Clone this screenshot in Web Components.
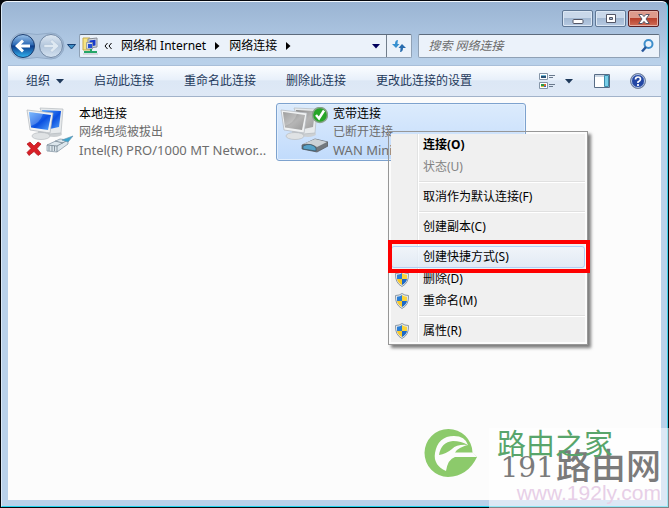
<!DOCTYPE html>
<html lang="zh-CN">
<head>
<meta charset="UTF-8">
<meta name="viewport" content="width=device-width, initial-scale=1">
<title>网络连接</title>
<style>
    * {
        box-sizing: border-box;
    }

    body {
        margin: 0;
        min-height: 100vh;
        display: flex;
        background: #05070c;
        color: #000;
        font: 12px/18px "Noto Sans", "Noto Sans CJK SC", sans-serif;
    }
</style>
</head>
<body>

<explorer-window>
    <window-controls slot="title"></window-controls>
    <nav-bar slot="nav"></nav-bar>
    <command-bar slot="commands"></command-bar>

    <connection-item name="本地连接" status="网络电缆被拔出" device="Intel(R) PRO/1000 MT Networ..." kind="lan"></connection-item>
    <connection-item name="宽带连接" status="已断开连接" device="WAN Minip" kind="wan" selected></connection-item>
</explorer-window>

<context-menu>
    <menu-item bold>连接(O)</menu-item>
    <menu-item disabled>状态(U)</menu-item>
    <menu-line></menu-line>
    <menu-item>取消作为默认连接(F)</menu-item>
    <menu-line></menu-line>
    <menu-item>创建副本(C)</menu-item>
    <menu-line></menu-line>
    <menu-item marked>创建快捷方式(S)</menu-item>
    <menu-item shield>删除(D)</menu-item>
    <menu-item shield>重命名(M)</menu-item>
    <menu-line></menu-line>
    <menu-item shield>属性(R)</menu-item>
</context-menu>

<site-mark></site-mark>

<script>
    class ExplorerWindow extends HTMLElement {
        constructor() {
            super();
            this.attachShadow({ mode: 'open' });

            this.shadowRoot.innerHTML = `
                <style>
                    * {
                        box-sizing: border-box;
                    }

                    :host {
                        flex: 1;
                        margin: 1px;
                        display: flex;
                        flex-direction: column;
                        padding: 0 6px 6px;
                        box-sizing: border-box;
                        border: 1px solid;
                        border-color: #f1f7fd #3fd0ea #22d3ee #dbe9f7;
                        border-radius: 6px 6px 0 0;
                        background: linear-gradient(#9ab4d3, #b9d1ea 60px) #b9d1ea;
                    }

                    main {
                        flex: 1;
                        display: flex;
                        flex-wrap: wrap;
                        align-content: flex-start;
                        gap: 4px;
                        padding: 6px 14px;
                        background: #fcfcfc;
                    }
                </style>
                <slot name="title"></slot>
                <slot name="nav"></slot>
                <slot name="commands"></slot>
                <main><slot></slot></main>
            `;
        }
    }

    class WindowControls extends HTMLElement {
        constructor() {
            super();
            this.attachShadow({ mode: 'open' });

            this.shadowRoot.innerHTML = `
                <style>
                    :host {
                        display: flex;
                        justify-content: flex-end;
                        gap: 2px;
                        padding: 8px 2px 7px;
                    }

                    button {
                        width: 31px;
                        height: 17px;
                        padding: 0;
                        border: 1px solid #5f7795;
                        border-radius: 2px;
                        background: linear-gradient(#c9d8ea 45%, #a3b9d3 50%, #b6cae2);
                        box-shadow: inset 0 0 0 1px #dbe7f4;
                    }

                    .close {
                        border-color: #5a1f24;
                        background: linear-gradient(#dd9a8c 45%, #b8402c 50%, #cf6d57);
                        box-shadow: inset 0 0 0 1px #e5b0a5;
                    }

                    svg {
                        display: block;
                        margin: auto;
                    }
                </style>
                <button aria-label="最小化"><svg width="12" height="12"><rect x="1" y="6.5" width="10" height="4" rx="1" fill="#fff" stroke="#535666"/></svg></button>
                <button aria-label="最大化"><svg width="12" height="12"><path d="M1.500 1.500h9v8h-9zM4.500 4.500h3v2h-3z" fill="#fff" fill-rule="evenodd" stroke="#535666"/></svg></button>
                <button class="close" aria-label="关闭"><svg width="12" height="12"><path d="M.7 1.500h3.500L6 3.600l1.800-2.100h3.500L8 6l3.300 4.500H7.800L6 8.400l-1.800 2.100H.7L4 6z" fill="#fff" stroke="#535666"/></svg></button>
            `;
        }
    }

    class NavBar extends HTMLElement {
        constructor() {
            super();
            this.attachShadow({ mode: 'open' });

            this.shadowRoot.innerHTML = `
                <style>
                    * {
                        box-sizing: border-box;
                    }

                    :host {
                        display: flex;
                        align-items: flex-start;
                        gap: 3px;
                        height: 31px;
                        padding-left: 2px;
                    }

                    button {
                        display: flex;
                        align-items: center;
                        padding: 0;
                        border: 0;
                        background: none;
                        color: inherit;
                        font: inherit;
                    }

                    .travel {
                        flex: none;
                        display: flex;
                        width: 66px;
                        height: 24px;
                    }

                    .travel svg {
                        overflow: visible;
                        flex: none;
                    }

                    .address,
                    .search {
                        display: flex;
                        align-items: center;
                        height: 24px;
                        min-width: 0;
                        border: 1px solid #8fa1b5;
                        border-top-color: #5d6b7c;
                        border-radius: 2px;
                        background: #ebf2fa;
                    }

                    .address {
                        flex: 334 1 334px;
                        margin-right: 3px;
                        padding-left: 2px;
                    }

                    .address svg {
                        flex: none;
                    }

                    .crumbs {
                        flex: 1;
                        display: flex;
                        align-items: center;
                        gap: 9px;
                        padding-left: 5px;
                        white-space: nowrap;
                    }

                    .refresh {
                        align-self: stretch;
                        width: 25px;
                        margin-left: 6px;
                        justify-content: center;
                        border-left: 1px solid #717e8c;
                    }

                    .search {
                        flex: 242 1 242px;
                        margin-right: 1px;
                        padding: 0 5px 0 9px;
                    }

                    input {
                        flex: 1;
                        min-width: 0;
                        padding: 0;
                        border: 0;
                        outline: 0;
                        background: none;
                        font: inherit;
                    }

                    input::placeholder {
                        color: #6d6d6d;
                        font-style: italic;
                    }
                </style>

                <div class="travel">
                    <button aria-label="后退"><svg width="28" height="24" viewBox="0 0 28 24"><defs><linearGradient id="b" x2="0" y2="1"><stop stop-color="#9cc3ea"/><stop offset=".45" stop-color="#2a68b4"/><stop offset=".5" stop-color="#0b3b8c"/><stop offset="1" stop-color="#35b5f0"/></linearGradient></defs><path d="M13-1Q27 2 41-1a13 13 0 0 1 0 26Q27 22 13 25a13 13 0 0 1 0-26z" fill="#a9c0da" stroke="#92abc8"/><circle cx="13" cy="12" r="11.500" fill="url(#b)" stroke="#1d3e70"/><path d="M5 12l7-6.500 2 2.200-3 2.800h9v3h-9l3 2.800-2 2.200z" fill="#fff"/></svg></button>
                    <button aria-label="前进"><svg width="28" height="24" viewBox="0 0 28 24"><defs><linearGradient id="f" x2="0" y2="1"><stop stop-color="#dfe9f3"/><stop offset=".5" stop-color="#b3c6dc"/><stop offset="1" stop-color="#d4e2f0"/></linearGradient></defs><circle cx="13" cy="12" r="11.500" fill="url(#f)" stroke="#7188a5"/><path d="M21 12l-7-6.500-2 2.200 3 2.800H6v3h9l-3 2.800 2 2.200z" fill="#dfe9f2" stroke="#a9bdd3" stroke-width=".5"/></svg></button>
                    <button aria-label="最近的页面"><svg width="10" height="24" viewBox="0 0 10 24"><path d="M1.500 10.500h8L5.500 15z" fill="#3d8fc6" stroke="#173f73"/></svg></button>
                </div>

                <div class="address">
                    <svg width="17" height="18" viewBox="0 0 17 18"><path d="M1 1h7v12H1z" fill="#f6e482" stroke="#c6a94a"/><path d="M6 2l9-1v9l-9 1z" fill="#d8dce2" stroke="#858b95"/><path d="M7.500 3.500l6-.7v5.800l-6 1z" fill="#1639c9"/><path d="M4.500 5.500h6V12h-6z" fill="#d6dde8" stroke="#838c98" stroke-width=".7"/><path d="M6 7h4v4H6z" fill="#2450d5"/><path d="M8 12h2v2h5v2H2v-2h6z" fill="#24a567"/><path d="M1 17h15" stroke="#b7bec4"/></svg>
                    <div class="crumbs">
                        <button aria-label="上级"><svg width="8" height="8"><path d="M3.500 1L1 4l2.500 3M7.500 1L5 4l2.500 3" fill="none" stroke="#000"/></svg></button>
                        <button>网络和 Internet</button>
                        <svg width="5" height="8"><path d="M0 0v8l4.500-4z"/></svg>
                        <button>网络连接</button>
                        <svg width="5" height="8"><path d="M0 0v8l4.500-4z"/></svg>
                    </div>
                    <button aria-label="以前的位置"><svg width="8" height="5"><path d="M0 0h8L4 4.500z" fill="#00005c"/></svg></button>
                    <button class="refresh" aria-label="刷新"><svg width="14" height="14"><path d="M6 1Q3 1 3 5H0l4 4 3.500-4H5.500Q5.500 3 6 1z" fill="#3690d0"/><path d="M8 13q3 0 3-4h3l-4-4-3.500 4h2q0 2-.5 4z" fill="#286cae"/></svg></button>
                </div>

                <div class="search">
                    <input type="text" placeholder="搜索 网络连接" aria-label="搜索 网络连接">
                    <svg width="14" height="14"><circle cx="8.500" cy="5" r="4" fill="none" stroke="#3d8ecb" stroke-width="2"/><path d="M6 8l-4 4.500" stroke="#28579a" stroke-width="2.500"/></svg>
                </div>
            `;
        }
    }

    class CommandBar extends HTMLElement {
        constructor() {
            super();
            this.attachShadow({ mode: 'open' });

            this.shadowRoot.innerHTML = `
                <style>
                    :host {
                        display: flex;
                        align-items: center;
                        height: 32px;
                        padding: 0 0 0 3px;
                        box-sizing: border-box;
                        border-top: 1px solid #a9bfd9;
                        border-bottom: 1px solid #a2b3ca;
                        background: linear-gradient(#fbfdff, #e8f0fa 45%, #dce7f5 50%, #dfe9f6);
                    }

                    button {
                        display: flex;
                        align-items: center;
                        gap: 6px;
                        padding: 0 15px;
                        border: 0;
                        background: none;
                        color: #1e395b;
                        font: inherit;
                        white-space: nowrap;
                    }

                    .view {
                        margin-left: auto;
                        gap: 10px;
                        padding: 0 21px 0 0;
                    }

                    .pane {
                        padding: 0 10px 0 0;
                    }

                    .help {
                        padding: 0 15px 0 10px;
                    }
                </style>
                <button>组织 <svg width="8" height="5"><path d="M0 0h8L4 4.500z" fill="#1e395b"/></svg></button>
                <button>启动此连接</button>
                <button>重命名此连接</button>
                <button>删除此连接</button>
                <button>更改此连接的设置</button>
                <button class="view" aria-label="更改视图">
                    <svg width="16" height="16"><path d="M.5.500h8v6h-8zM.5 9.500h8v6h-8z" fill="#fff" stroke="#8494a7"/><path d="M2 2h5v1H2z" fill="#6db6d3"/><path d="M2 3h5v2H2z" fill="#264e73"/><path d="M2 11h3v2H2z" fill="#2a9a46"/><path d="M5 11h2v2H5z" fill="#d56b35"/><path d="M2 13h3v1H2z" fill="#d4b832"/><path d="M5 13h2v1H5z" fill="#3264c5"/><path d="M10 2.500h6M10 4.500h4M10 11.500h6M10 13.500h4" stroke="#68788c"/></svg>
                    <svg width="8" height="5"><path d="M0 0h8L4 4.500z" fill="#1e395b"/></svg>
                </button>
                <button class="pane" aria-label="显示预览窗格"><svg width="16" height="14"><path d="M.5.500h15v13H.5z" fill="#fff" stroke="#586c86"/><path d="M1 1h14v2H1z" fill="#cbd7e4"/><path d="M10.500 1.500h4v11h-4z" fill="#78cee8" stroke="#3c8aa9"/></svg></button>
                <button class="help" aria-label="获取帮助"><svg width="16" height="16"><circle cx="8" cy="8" r="7.500" fill="#2347a5" stroke="#76849b"/><circle cx="8" cy="8" r="6.500" fill="none" stroke="#b8c8e2"/><path d="M5.500 6.500Q5.500 4 8 4t2.500 2.200Q10.500 7.500 8 9v1M8 11v2" fill="none" stroke="#fff" stroke-width="1.700"/></svg></button>
            `;
        }
    }

    // two monitors, shared by both kinds of connection
    const screens = (on) => `
        <defs>
            <linearGradient id="s" x2="1" y2="1"><stop stop-color="${on ? '#58a8ff' : '#858585'}"/><stop offset=".55" stop-color="${on ? '#0a4fe0' : '#b5b5b5'}"/><stop offset="1" stop-color="${on ? '#59a5fa' : '#999'}"/></linearGradient>
        </defs>
        <ellipse cx="28" cy="27" rx="8" ry="3" fill="#ccd0d3"/>
        <path d="M14 1l23 1-2 24-12 1z" fill="#e7eaec" stroke="#b5babf" stroke-width=".7"/>
        <path d="M16 3l19 1-2 16-14 3z" fill="url(#s)"/>
        <path d="M12 22h8v8h-8z" fill="#c8cccf"/>
        <ellipse cx="15" cy="29" rx="9" ry="3.500" fill="#dfe2e4" stroke="#b8bcc0" stroke-width=".7"/>
        <path d="M1 3l26 3-3 20-20-3z" fill="#f0f2f3" stroke="#b0b5ba" stroke-width=".7"/>
        <path d="M3 5l22 3-3 15-17-2.500z" fill="url(#s)"/>
        <path d="M3 5l14 2Q14 16 5 19z" fill="#fff" opacity=".22"/>
    `;

    const pictures = {
        lan: `<svg width="48" height="50" viewBox="0 0 48 50">${screens(true)}
            <path d="M1 37l3-2 4 4 4-4 3 2-4 4.500 4 5-3 2-4-4-5 4-2-3 4-4z" fill="#d91f26" stroke="#ad1017" stroke-width=".7"/>
            <path d="M21 38l13-6 8 1v4l-11 8-10-1z" fill="#dce6ec" stroke="#8a9ba8" stroke-width=".8"/>
            <path d="M21 38l10 1 11-6M31 39v6M23 39v5M26 39v5M28.500 39v5M29 34l8 2" fill="none" stroke="#71818e" stroke-width=".8"/>
            <path d="M36 33l11-4-5 6z" fill="#38a6cf" stroke="#6c98b3" stroke-width=".7"/></svg>`,
        wan: `<svg width="48" height="50" viewBox="0 0 48 50">${screens(false)}
            <circle cx="40" cy="8" r="7.500" fill="#27a527" stroke="#8aa18b" stroke-width="1.500"/>
            <path d="M36 8l3 3.500 5-8" fill="none" stroke="#fff" stroke-width="2.500"/>
            <path d="M22 38l13-6 13 3v4l-11 6-15-3z" fill="#73787d" stroke="#56595d" stroke-width=".7"/>
            <path d="M23 37l12-5 12 3-10 5q-6-4-14-3z" fill="#cdd2d6"/>
            <path d="M23 39q8-4 13 2v3l-13-2z" fill="#57a2c8" stroke="#30495a" stroke-width=".6"/></svg>`
    };

    class ConnectionItem extends HTMLElement {
        constructor() {
            super();
            this.attachShadow({ mode: 'open' });

            this.shadowRoot.innerHTML = `
                <style>
                    :host {
                        display: flex;
                        align-items: center;
                        gap: 5px;
                        width: 250px;
                        height: 58px;
                        padding: 0 3px;
                        box-sizing: border-box;
                        border: 1px solid transparent;
                        border-radius: 3px;
                        color: #6d6d6d;
                    }

                    :host([selected]) {
                        border-color: #7da2ce;
                        background: linear-gradient(#dcebfc, #c1dbfc);
                        box-shadow: inset 0 0 0 1px #e3effd;
                    }

                    svg {
                        flex: none;
                    }

                    p {
                        margin: 0;
                        white-space: nowrap;
                    }

                    .name {
                        color: #000;
                    }

                    .device {
                        font-size: 13px;
                    }
                </style>
                ${pictures[this.getAttribute('kind')]}
                <div>
                    <p class="name">${this.getAttribute('name')}</p>
                    <p>${this.getAttribute('status')}</p>
                    <p class="device">${this.getAttribute('device')}</p>
                </div>
            `;
        }
    }

    class ContextMenu extends HTMLElement {
        constructor() {
            super();
            this.attachShadow({ mode: 'open' });

            this.shadowRoot.innerHTML = `
                <style>
                    :host {
                        position: absolute;
                        left: 388px;
                        top: 131px;
                        width: 200px;
                        padding: 2px;
                        box-sizing: border-box;
                        border: 1px solid #979797;
                        background: linear-gradient(90deg, transparent 26px, #e2e3e3 26px 27px, #fff 27px 28px, transparent 28px) content-box #f0f0f0;
                        box-shadow: 3px 3px 3px rgba(0, 0, 0, 0.5);
                    }
                </style>
                <div role="menu"><slot></slot></div>
            `;
        }
    }

    class MenuItem extends HTMLElement {
        constructor() {
            super();
            this.attachShadow({ mode: 'open' });

            this.shadowRoot.innerHTML = `
                <style>
                    :host {
                        display: block;
                        position: relative;
                    }

                    button {
                        display: flex;
                        align-items: center;
                        gap: 14px;
                        width: 100%;
                        height: 22px;
                        padding: 0 0 0 3px;
                        border: 1px solid transparent;
                        border-radius: 3px;
                        background: none;
                        color: #000;
                        font: inherit;
                    }

                    :host([bold]) button {
                        font-weight: bold;
                    }

                    button:disabled {
                        color: #838383;
                    }

                    :host([marked]) {
                        z-index: 1;
                    }

                    :host([marked]) button {
                        border-color: #aecff7;
                        background: linear-gradient(rgba(240, 246, 253, 0.7), rgba(220, 232, 246, 0.7));
                    }

                    :host([marked])::after {
                        content: "";
                        position: absolute;
                        inset: -6px -5px -5px -3px;
                        border: 4px solid #fe0000;
                        pointer-events: none;
                    }

                    svg {
                        flex: none;
                        visibility: hidden;
                    }

                    :host([shield]) svg {
                        visibility: visible;
                    }
                </style>
                <button role="menuitem" ${this.hasAttribute('disabled') ? 'disabled' : ''}>
                    <svg width="14" height="16" viewBox="0 0 14 16">
                        <path d="M7 .5Q9.500 2.500 13.500 2.500 14 12 7 15.500 0 12 .5 2.500 4.500 2.500 7 .5z" fill="#e9eef2" stroke="#8b98a3"/>
                        <path d="M7 2Q5 3.500 2 3.700V8h5z" fill="#2a7ed6"/>
                        <path d="M7 2q2 1.500 5 1.700V8H7z" fill="#fbd43a"/>
                        <path d="M2 8h5v6Q2.500 11.500 2 8z" fill="#f8c92a"/>
                        <path d="M12 8H7v6q4.500-2.500 5-6z" fill="#1c68c6"/>
                    </svg>
                    <slot></slot>
                </button>
            `;
        }
    }

    class MenuLine extends HTMLElement {
        constructor() {
            super();
            this.attachShadow({ mode: 'open' });

            this.shadowRoot.innerHTML = `
                <style>
                    :host {
                        display: block;
                        padding: 3px 0 3px 28px;
                    }

                    hr {
                        height: 2px;
                        margin: 0;
                        box-sizing: border-box;
                        border: 0;
                        border-bottom: 1px solid #fff;
                        background: #e0e0e0;
                    }
                </style>
                <hr>
            `;
        }
    }

    class SiteMark extends HTMLElement {
        constructor() {
            super();
            this.attachShadow({ mode: 'open' });

            this.shadowRoot.innerHTML = `
                <style>
                    :host {
                        position: absolute;
                        right: 0;
                        bottom: 0;
                        display: flex;
                        gap: 12px;
                        height: 80px;
                        pointer-events: none;
                        white-space: nowrap;
                    }

                    .text {
                        position: relative;
                        width: 180px;
                        background: rgba(255, 255, 255, 0.5);
                    }

                    span {
                        position: absolute;
                    }

                    .home {
                        left: 8px;
                        top: 0;
                        color: #58a56b;
                        font-size: 29px;
                        line-height: 32px;
                    }

                    .big {
                        right: 8px;
                        top: 18px;
                        display: flex;
                        gap: 2px;
                        color: #7b7b7b;
                        font-size: 35px;
                        line-height: 40px;
                        font-weight: 500;
                    }

                    .big b {
                        font: 28px/44px "DejaVu Serif", serif;
                    }

                    .url {
                        right: 8px;
                        bottom: 2px;
                        color: #e7cfe7;
                        font: 21px/26px "Liberation Sans", sans-serif;
                    }
                </style>
                <svg width="53" height="50" viewBox="0 0 53 50">
                    <path d="M48.500 24.500A24 24 0 1 0 24 49Q44 48 53 29L48.500 24.500z" fill="#8cca6b"/>
                    <path d="M22 43Q9 37 11 25 14 8 30 8 41 8 44 17 42 17 36 20 32 22 31 24.500H49L53 29H31Q24 31 22 43z" fill="#fcfcfc"/>
                    <path d="M15 27Q17 14 29 13 37 13 44 17 33 16 28 21 22 26 15 27z" fill="#8cca6b"/>
                </svg>
                <div class="text">
                    <span class="big"><b>191</b>路由网</span>
                    <span class="home">路由之家</span>
                    <span class="url">www.192ly.com</span>
                </div>
            `;
        }
    }

    customElements.define('explorer-window', ExplorerWindow);
    customElements.define('window-controls', WindowControls);
    customElements.define('nav-bar', NavBar);
    customElements.define('command-bar', CommandBar);
    customElements.define('connection-item', ConnectionItem);
    customElements.define('context-menu', ContextMenu);
    customElements.define('menu-item', MenuItem);
    customElements.define('menu-line', MenuLine);
    customElements.define('site-mark', SiteMark);
</script>
</body>
</html>
